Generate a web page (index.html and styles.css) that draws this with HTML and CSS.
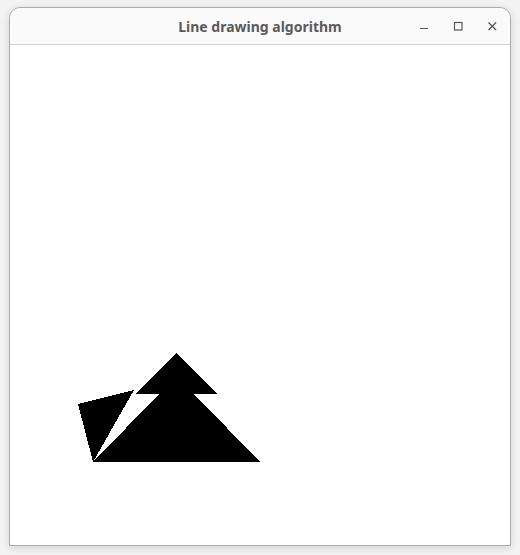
FILE: index.html
```html
<!DOCTYPE html>
<html>
<head>
<meta charset="utf-8">
<title>Line drawing algorithm</title>
<link rel="stylesheet" href="styles.css">
</head>
<body>
<div class="window">
  <div class="titlebar">
    <div class="title">Line drawing algorithm</div>
    <div class="controls">
      <svg class="ctl" width="10" height="10" viewBox="0 0 10 10"><line x1="1" y1="7.5" x2="9" y2="7.5" stroke="#555" stroke-width="1"/></svg>
      <svg class="ctl" width="10" height="10" viewBox="0 0 10 10"><rect x="1.5" y="1.5" width="7.5" height="7.5" fill="none" stroke="#555" stroke-width="1.2"/></svg>
      <svg class="ctl" width="10" height="10" viewBox="0 0 10 10"><path d="M1.5 1.5 L9 9 M9 1.5 L1.5 9" stroke="#555" stroke-width="1.3"/></svg>
    </div>
  </div>
  <div class="canvas">
    <svg width="500" height="500" viewBox="0 0 500 500" shape-rendering="crispEdges">
      <polygon points="166,308 125,349 208,349" fill="#000"/>
      <polygon points="83,417 250,417 166.5,331" fill="#000"/>
      <polygon points="68,359 124,345 83,417" fill="#000"/>
    </svg>
  </div>
</div>
</body>
</html>
```

FILE: styles.css
```css
html, body {
  margin: 0;
  padding: 0;
  background: #f4f4f4;
}
body {
  padding: 7px 0 0 9px;
  width: 520px;
  height: 555px;
  box-sizing: border-box;
  overflow: hidden;
}
.window {
  width: 502px;
  height: 539px;
  box-sizing: border-box;
  border: 1px solid #adadad;
  border-radius: 11px 11px 0 0;
  background: #fff;
  box-shadow: 0 2px 10px rgba(0, 0, 0, 0.14);
  display: flex;
  flex-direction: column;
  overflow: hidden;
}
.titlebar {
  height: 37px;
  box-sizing: border-box;
  flex: none;
  background: #fafafa;
  border-bottom: 1px solid #d2d2d2;
  border-radius: 10px 10px 0 0;
  position: relative;
  display: flex;
  align-items: center;
  justify-content: center;
}
.title {
  font-family: "Noto Sans", "Open Sans", sans-serif;
  font-weight: 700;
  font-size: 14px;
  color: #5a5a5a;
  margin-top: 1px;
}
.controls {
  position: absolute;
  right: 13px;
  top: 13px;
  display: flex;
  gap: 24px;
}
.ctl {
  display: block;
}
.canvas {
  flex: 1;
  background: #fff;
}
.canvas svg {
  display: block;
}
```
